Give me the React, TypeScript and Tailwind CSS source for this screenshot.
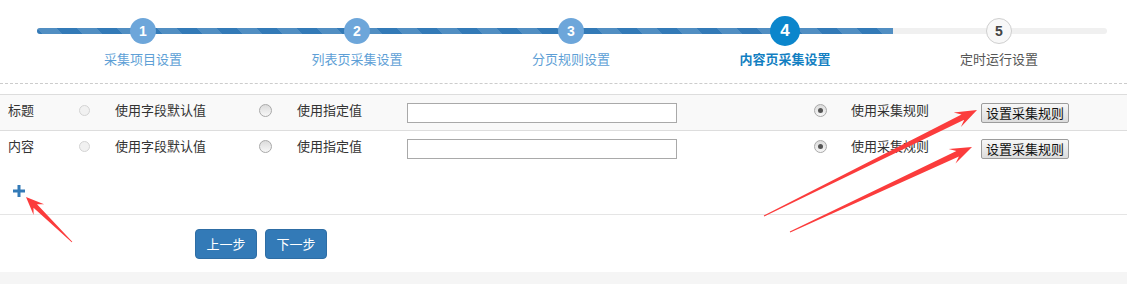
import React from "react";

type StepState = "done" | "active" | "todo";

const steps: { n: number; label: string; state: StepState }[] = [
  { n: 1, label: "采集项目设置", state: "done" },
  { n: 2, label: "列表页采集设置", state: "done" },
  { n: 3, label: "分页规则设置", state: "done" },
  { n: 4, label: "内容页采集设置", state: "active" },
  { n: 5, label: "定时运行设置", state: "todo" },
];

const rows = ["标题", "内容"];

// tapered annotation arrow, tail -> tip
const arrowPoints = (
  tx: number,
  ty: number,
  px: number,
  py: number,
  shaftW: number,
  headL: number,
  headW: number
) => {
  const len = Math.hypot(px - tx, py - ty);
  const dx = (px - tx) / len;
  const dy = (py - ty) / len;
  const nx = -dy;
  const ny = dx;
  const jx = px - dx * headL * 0.72;
  const jy = py - dy * headL * 0.72;
  const bx = px - dx * headL;
  const by = py - dy * headL;
  const pts = [
    [tx + nx * 0.4, ty + ny * 0.4],
    [jx + (nx * shaftW) / 2, jy + (ny * shaftW) / 2],
    [bx + (nx * headW) / 2, by + (ny * headW) / 2],
    [px, py],
    [bx - (nx * headW) / 2, by - (ny * headW) / 2],
    [jx - (nx * shaftW) / 2, jy - (ny * shaftW) / 2],
    [tx - nx * 0.4, ty - ny * 0.4],
  ];
  return pts.map((p) => `${p[0].toFixed(1)},${p[1].toFixed(1)}`).join(" ");
};

const Circle = ({ n, state }: { n: number; state: StepState }) => {
  if (state === "active") {
    return (
      <div className="w-[30px] h-[30px] rounded-full bg-[#0b86cc] flex items-center justify-center text-white text-[17px] font-bold font-['Liberation_Sans',sans-serif]">
        {n}
      </div>
    );
  }
  if (state === "todo") {
    return (
      <div className="w-[26px] h-[26px] rounded-full bg-[#f8f8f8] border border-[#cfcfcf] flex items-center justify-center text-[#444] text-[14px] font-bold font-['Liberation_Sans',sans-serif]">
        {n}
      </div>
    );
  }
  return (
    <div className="w-[26px] h-[26px] rounded-full bg-[#6da6da] flex items-center justify-center text-white text-[14px] font-bold font-['Liberation_Sans',sans-serif]">
      {n}
    </div>
  );
};

const App: React.FC = () => {
  return (
    <div className="relative w-full h-[284px] bg-white overflow-hidden text-[13px] text-[#333] font-['Noto_Sans_CJK_SC',sans-serif]">
      {/* steps */}
      <div className="h-[84px] border-b border-dashed border-[#cccccc]">
        <div className="relative ml-[36px] w-[1070px] pt-[16px]">
          <div className="absolute top-[28px] left-[1px] w-[1070px] h-[6px] rounded-full bg-[#f0f0f0] overflow-hidden">
            <div className="w-[856px] h-full bg-[#337ab7] bg-[linear-gradient(45deg,rgba(255,255,255,0.15)_25%,transparent_25%,transparent_50%,rgba(255,255,255,0.15)_50%,rgba(255,255,255,0.15)_75%,transparent_75%,transparent)] bg-[length:40px_40px]" />
          </div>
          <div className="relative grid grid-cols-5">
            {steps.map((s) => (
              <div key={s.n} className="flex flex-col items-center">
                <div className="h-[30px] flex items-center">
                  <Circle n={s.n} state={s.state} />
                </div>
                <div
                  className={
                    s.state === "done"
                      ? "mt-[4px] leading-[18px] text-[#5e9fd6]"
                      : s.state === "active"
                      ? "mt-[4px] leading-[18px] text-[#137fc2] font-bold"
                      : "mt-[4px] leading-[18px] text-[#555]"
                  }
                >
                  {s.label}
                </div>
              </div>
            ))}
          </div>
        </div>
      </div>

      {/* field rows */}
      <div className="mt-[10px]">
        {rows.map((r, i) => (
          <div
            key={r}
            className={
              i === 0
                ? "flex items-center h-[36px] border-t border-[#dddddd] bg-[#f9f9f9]"
                : "flex items-center h-[36px] border-t border-[#dddddd]"
            }
          >
            <div className="w-[79px] pl-[8px] pb-[5px] leading-[18px]">{r}</div>
            <div className="w-[36px] pb-[5px] flex items-center">
              <div className="w-[11px] h-[11px] rounded-full border border-[#d4d4d4] bg-[#f1f1f1]" />
            </div>
            <div className="w-[144px] pb-[5px] leading-[18px]">使用字段默认值</div>
            <div className="w-[38px] pb-[5px] flex items-center">
              <div className="w-[13px] h-[13px] rounded-full border border-[#a9a9a9] bg-[linear-gradient(#dcdcdc,#f7f7f7)]" />
            </div>
            <div className="w-[110px] pb-[5px] leading-[18px]">使用指定值</div>
            <div className="w-[407px]">
              <div className="w-[270px] h-[20px] border border-[#a9a9a9] bg-white" />
            </div>
            <div className="w-[37px] pb-[5px] flex items-center">
              <div className="w-[13px] h-[13px] rounded-full border border-[#a9a9a9] bg-[linear-gradient(#dcdcdc,#f7f7f7)] flex items-center justify-center">
                <div className="w-[5px] h-[5px] rounded-full bg-[#555]" />
              </div>
            </div>
            <div className="w-[130px] pb-[5px] leading-[18px]">使用采集规则</div>
            <button className="w-[88px] h-[20px] border border-[#9c9c9c] rounded-[2px] bg-[linear-gradient(#f7f7f7,#dcdcdc)] text-[13px] leading-[18px] text-[#111]">
              设置采集规则
            </button>
          </div>
        ))}
      </div>

      {/* add */}
      <div className="h-[48px] pl-[13px] pt-[19px]">
        <svg width="12" height="12" viewBox="0 0 12 12">
          <rect x="0" y="4.5" width="12" height="3" fill="#337ab7" />
          <rect x="4.5" y="0" width="3" height="12" fill="#337ab7" />
        </svg>
      </div>

      {/* footer buttons */}
      <div className="border-t border-[#e5e5e5] pt-[14px] pb-[13px] pl-[195px] flex gap-[8px]">
        <button className="w-[62px] h-[30px] rounded-[4px] bg-[#337ab7] border border-[#2e6da4] text-white text-[13px]">
          上一步
        </button>
        <button className="w-[62px] h-[30px] rounded-[4px] bg-[#337ab7] border border-[#2e6da4] text-white text-[13px]">
          下一步
        </button>
      </div>
      <div className="h-[12px] bg-[#f5f5f5]" />

      {/* annotation arrows */}
      <svg
        className="absolute inset-0 pointer-events-none"
        width="1127"
        height="284"
        viewBox="0 0 1127 284"
      >
        <polygon points={arrowPoints(764, 216, 977, 110, 6, 22, 16)} fill="#fb3c3c" />
        <polygon points={arrowPoints(790, 232, 972, 147, 6, 22, 16)} fill="#fb3c3c" />
        <polygon points={arrowPoints(72, 242, 26, 197, 5, 18, 15)} fill="#fb3c3c" />
      </svg>
    </div>
  );
};

export default App;
